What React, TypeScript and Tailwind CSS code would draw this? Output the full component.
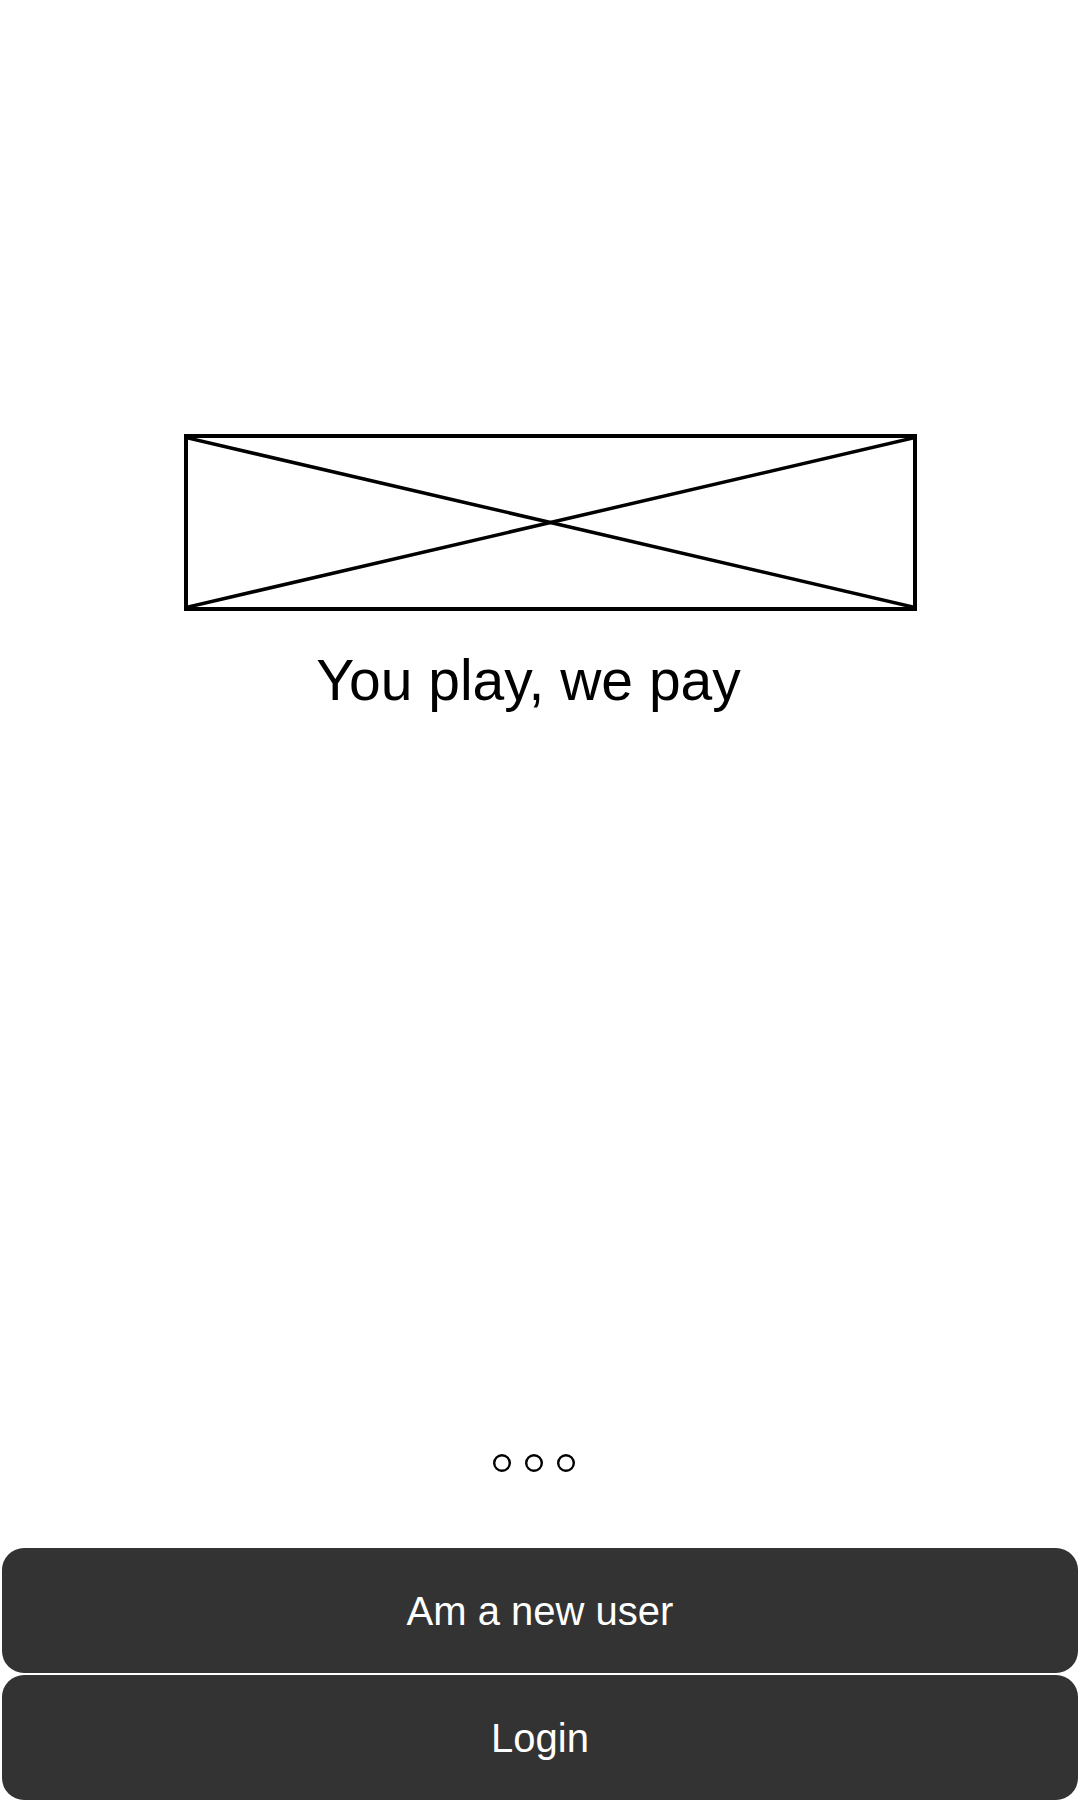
export default function App() {
  return (
    <div className="flex h-[1800px] w-[1080px] flex-col overflow-hidden bg-white font-['Liberation_Sans',Arial,sans-serif] text-black">
      {/* Hero image placeholder */}
      <div className="ml-[184px] mt-[434px] h-[177px] w-[733px] border-[4px] border-black">
        <svg className="h-full w-full" viewBox="0 0 100 100" preserveAspectRatio="none">
          <line x1="0" y1="0" x2="100" y2="100" stroke="black" strokeWidth="3.5" vectorEffect="non-scaling-stroke" />
          <line x1="100" y1="0" x2="0" y2="100" stroke="black" strokeWidth="3.5" vectorEffect="non-scaling-stroke" />
        </svg>
      </div>

      <h1 className="mt-[41px] pr-[23px] text-center text-[57px] leading-none">You play, we pay</h1>

      {/* Pager dots */}
      <div className="mb-[76px] mt-auto flex justify-center gap-[14px] pr-[12px]">
        {[0, 1, 2].map((i) => (
          <svg key={i} width="18" height="18" viewBox="0 0 18 18">
            <circle cx="9" cy="9" r="7.8" fill="none" stroke="black" strokeWidth="2.4" />
          </svg>
        ))}
      </div>

      <div className="flex flex-col gap-[2px] px-[2px]">
        <button className="flex h-[125px] w-full items-center justify-center rounded-[22px] bg-[#333333] text-[40px] text-white">
          Am a new user
        </button>
        <button className="flex h-[125px] w-full items-center justify-center rounded-[22px] bg-[#333333] text-[40px] text-white">
          Login
        </button>
      </div>
    </div>
  );
}
